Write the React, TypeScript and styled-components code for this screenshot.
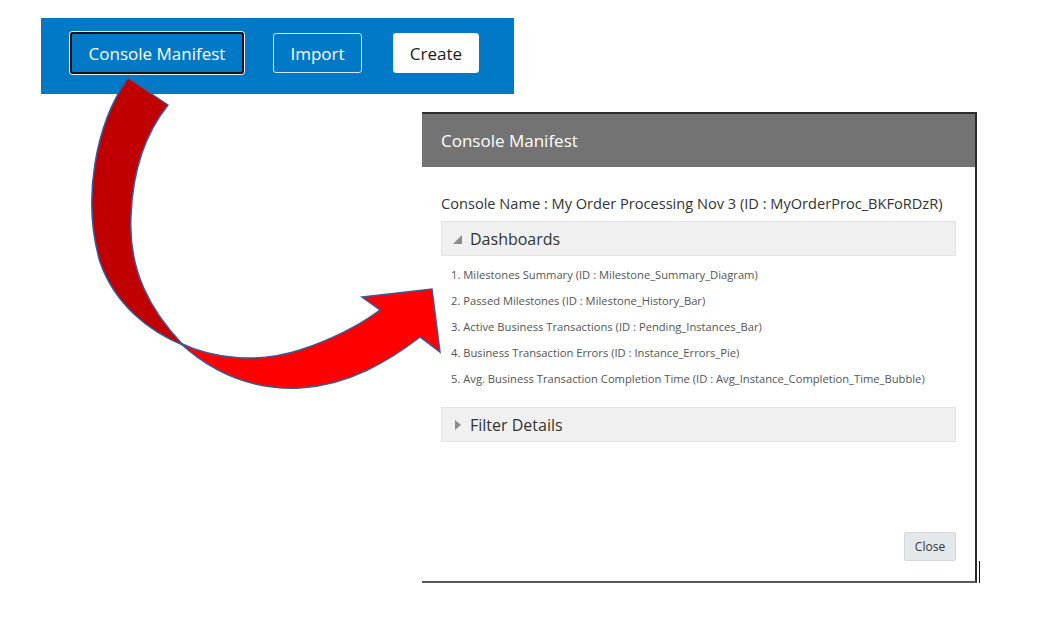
import React from "react";
import styled, { createGlobalStyle } from "styled-components";

const GlobalStyle = createGlobalStyle`
  html, body {
    margin: 0;
    padding: 0;
    background: #ffffff;
  }
  body {
    font-family: "Open Sans", "Noto Sans", sans-serif;
  }
`;

const dashboards = [
  "Milestones Summary (ID : Milestone_Summary_Diagram)",
  "Passed Milestones (ID : Milestone_History_Bar)",
  "Active Business Transactions (ID : Pending_Instances_Bar)",
  "Business Transaction Errors (ID : Instance_Errors_Pie)",
  "Avg. Business Transaction Completion Time (ID : Avg_Instance_Completion_Time_Bubble)",
];

export default function App() {
  return (
    <>
      <GlobalStyle />
      <Page>
        <Toolbar>
          <ToolbarButton $variant="focused" $width={174}>
            Console Manifest
          </ToolbarButton>
          <ToolbarButton $variant="outline" $width={89}>
            Import
          </ToolbarButton>
          <ToolbarButton $variant="solid" $width={86}>
            Create
          </ToolbarButton>
        </Toolbar>

        <Dialog>
          <DialogHeader>Console Manifest</DialogHeader>
          <DialogBody>
            <ConsoleName>Console Name : My Order Processing Nov 3 (ID : MyOrderProc_BKFoRDzR)</ConsoleName>
            <Section>
              <SectionHeader>
                <Caret $open />
                Dashboards
              </SectionHeader>
              <DashboardList>
                {dashboards.map((d, i) => (
                  <li key={d}>
                    {i + 1}. {d}
                  </li>
                ))}
              </DashboardList>
            </Section>
            <Section>
              <SectionHeader>
                <Caret />
                Filter Details
              </SectionHeader>
            </Section>
          </DialogBody>
          <DialogFooter>
            <CloseButton>Close</CloseButton>
          </DialogFooter>
        </Dialog>

        {/* curved "click leads to" arrow drawn over the screenshot */}
        <ArrowOverlay width="1037" height="622" viewBox="0 0 1037 622">
          <path
            d="M128,78 C95,125 82,200 100,262 C115,305 150,332 183,345 C150,310 128,270 131,215 C133,165 148,130 168,105 Z"
            fill="#c00000"
            stroke="#3b5997"
            strokeWidth="1.5"
            strokeLinejoin="round"
          />
          <path
            d="M180,343 C215,360 260,363 300,350 C330,340 360,325 380,310 L362,297 L432,289 L440,352 L420,337 C390,360 350,385 300,388 C255,390 215,375 180,343 Z"
            fill="#ff0000"
            stroke="#3b5997"
            strokeWidth="1.5"
            strokeLinejoin="miter"
          />
        </ArrowOverlay>
      </Page>
    </>
  );
}

const Page = styled.div`
  position: relative;
  width: 1037px;
  height: 622px;
  padding-top: 18px;
  box-sizing: border-box;
  overflow: hidden;
`;

const Toolbar = styled.div`
  margin-left: 41px;
  width: 473px;
  height: 76px;
  box-sizing: border-box;
  background: #0279c6;
  display: flex;
  align-items: flex-start;
  gap: 29px;
  padding: 14px 0 0 29px;
`;

const ToolbarButton = styled.button<{ $variant: "focused" | "outline" | "solid"; $width: number }>`
  font-family: "Open Sans", "Noto Sans", sans-serif;
  font-size: 17px;
  width: ${(p) => p.$width}px;
  height: ${(p) => (p.$variant === "focused" ? "42px" : "40px")};
  margin-top: ${(p) => (p.$variant === "focused" ? "0" : "1px")};
  margin-left: ${(p) => (p.$variant === "solid" ? "2px" : "0")};
  padding: 0;
  box-sizing: border-box;
  border-radius: 3px;
  cursor: pointer;
  color: ${(p) => (p.$variant === "solid" ? "#1c1c1c" : "#ffffff")};
  background: ${(p) => (p.$variant === "solid" ? "#ffffff" : "transparent")};
  border: ${(p) =>
    p.$variant === "focused" ? "2px solid #111" : p.$variant === "outline" ? "1px solid #d6e6f3" : "1px solid #fff"};
  box-shadow: ${(p) => (p.$variant === "focused" ? "0 0 0 1px #e8eef4" : "none")};
`;

const Dialog = styled.div`
  position: relative;
  margin-top: 18px;
  margin-left: 422px;
  width: 555px;
  height: 471px;
  box-sizing: border-box;
  border-top: 2px solid #2e2e2e;
  border-right: 2px solid #2b2b2b;
  border-bottom: 2px solid #5a5a5a;
  display: flex;
  flex-direction: column;
  background: #fff;

  &::after {
    content: "";
    position: absolute;
    right: -5px;
    bottom: -2px;
    width: 1px;
    height: 22px;
    background: #111;
  }
`;

const DialogHeader = styled.div`
  height: 53px;
  flex: none;
  background: #737373;
  color: #ffffff;
  font-size: 17px;
  display: flex;
  align-items: center;
  padding-left: 19px;
  padding-bottom: 1px;
  box-sizing: border-box;
`;

const DialogBody = styled.div`
  flex: 1;
  padding: 25px 19px 0 19px;
  display: flex;
  flex-direction: column;
`;

const ConsoleName = styled.div`
  font-size: 14.6px;
  color: #333333;
  line-height: 22px;
  white-space: nowrap;
  margin-bottom: 7px;
`;

const Section = styled.div`
  display: flex;
  flex-direction: column;
`;

const SectionHeader = styled.div`
  height: 35px;
  box-sizing: border-box;
  background: #f0f0f0;
  border: 1px solid #e4e4e4;
  display: flex;
  align-items: center;
  gap: 8px;
  padding-left: 11px;
  font-size: 16px;
  color: #333333;
`;

const Caret = styled.span<{ $open?: boolean }>`
  width: 0;
  height: 0;
  ${(p) =>
    p.$open
      ? `
    border-left: 9px solid transparent;
    border-bottom: 9px solid #8c8c8c;
    margin-top: 2px;
  `
      : `
    border-top: 5px solid transparent;
    border-bottom: 5px solid transparent;
    border-left: 6px solid #8c8c8c;
    margin-left: 2px;
    margin-right: 1px;
  `}
`;

const DashboardList = styled.ol`
  list-style: none;
  margin: 0;
  padding: 6px 0 15px 10px;

  li {
    font-size: 11.2px;
    line-height: 26px;
    color: #555555;
    white-space: nowrap;
  }
`;

const DialogFooter = styled.div`
  display: flex;
  justify-content: flex-end;
  padding: 0 19px 20px 0;
`;

const CloseButton = styled.button`
  font-family: "Open Sans", "Noto Sans", sans-serif;
  font-size: 12px;
  color: #333;
  height: 29px;
  width: 52px;
  background: #e4e8eb;
  border: 1px solid #d2d8dd;
  border-radius: 2px;
  cursor: pointer;
`;

const ArrowOverlay = styled.svg`
  position: absolute;
  left: 0;
  top: 0;
  pointer-events: none;
`;
